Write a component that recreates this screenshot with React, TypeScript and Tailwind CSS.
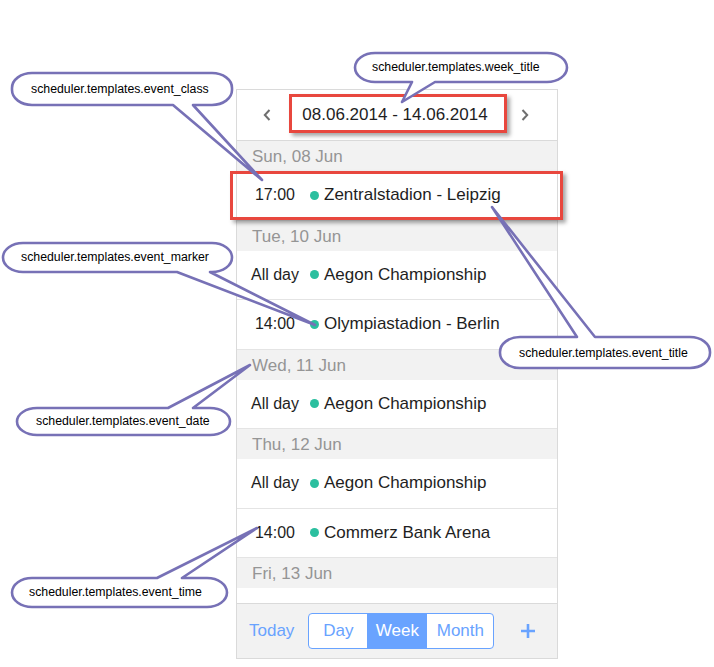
import React from "react"

type Day = {
	date: string
	events: { time: string; title: string }[]
}

const days: Day[] = [
	{ date: "Sun, 08 Jun", events: [{ time: "17:00", title: "Zentralstadion - Leipzig" }] },
	{
		date: "Tue, 10 Jun",
		events: [
			{ time: "All day", title: "Aegon Championship" },
			{ time: "14:00", title: "Olympiastadion - Berlin" },
		],
	},
	{ date: "Wed, 11 Jun", events: [{ time: "All day", title: "Aegon Championship" }] },
	{
		date: "Thu, 12 Jun",
		events: [
			{ time: "All day", title: "Aegon Championship" },
			{ time: "14:00", title: "Commerz Bank Arena" },
		],
	},
	// next rows are scrolled out of view
	{ date: "Fri, 13 Jun", events: [] },
]

type Callout = {
	x: number
	y: number
	w: number
	h: number
	side: "top" | "bottom"
	b1: number
	b2: number
	tip: [number, number]
	text: string
	tx: number
	ty: number
}

const callouts: Callout[] = [
	{ x: 355, y: 53, w: 212, h: 29, side: "bottom", b1: 412, b2: 435, tip: [402, 102], text: "scheduler.templates.week_title", tx: 372, ty: 71 },
	{ x: 12, y: 73, w: 220, h: 32, side: "bottom", b1: 173, b2: 193, tip: [262, 180], text: "scheduler.templates.event_class", tx: 31, ty: 93 },
	{ x: 3, y: 243, w: 229, h: 29, side: "bottom", b1: 177, b2: 210, tip: [315, 325], text: "scheduler.templates.event_marker", tx: 21, ty: 261 },
	{ x: 500, y: 337, w: 210, h: 31, side: "top", b1: 577, b2: 595, tip: [492, 207], text: "scheduler.templates.event_title", tx: 519, ty: 357 },
	{ x: 17, y: 408, w: 213, h: 27, side: "top", b1: 168, b2: 193, tip: [250, 365], text: "scheduler.templates.event_date", tx: 36, ty: 425 },
	{ x: 12, y: 578, w: 215, h: 29, side: "top", b1: 157, b2: 182, tip: [257, 528], text: "scheduler.templates.event_time", tx: 29, ty: 596 },
]

function bubblePath(c: Callout) {
	const rx = 20
	const ry = Math.min(15, c.h / 2)
	const R = c.x + c.w
	const B = c.y + c.h
	const [px, py] = c.tip
	if (c.side === "bottom") {
		return `M${c.x + rx},${c.y} H${R - rx} A${rx},${ry} 0 0 1 ${R},${c.y + ry} V${B - ry} A${rx},${ry} 0 0 1 ${R - rx},${B} H${c.b2} L${px},${py} L${c.b1},${B} H${c.x + rx} A${rx},${ry} 0 0 1 ${c.x},${B - ry} V${c.y + ry} A${rx},${ry} 0 0 1 ${c.x + rx},${c.y} Z`
	}
	return `M${c.x + rx},${c.y} H${c.b1} L${px},${py} L${c.b2},${c.y} H${R - rx} A${rx},${ry} 0 0 1 ${R},${c.y + ry} V${B - ry} A${rx},${ry} 0 0 1 ${R - rx},${B} H${c.x + rx} A${rx},${ry} 0 0 1 ${c.x},${B - ry} V${c.y + ry} A${rx},${ry} 0 0 1 ${c.x + rx},${c.y} Z`
}

const Chevron = ({ flip = false }: { flip?: boolean }) => (
	<svg width="8" height="12" viewBox="0 0 8 12" className={flip ? "rotate-180" : ""}>
		<path d="M6.5 1 L1.8 6 L6.5 11" fill="none" stroke="#6f6f6f" strokeWidth="2" />
	</svg>
)

export default function App() {
	return (
		<div className="relative w-[714px] h-[667px] bg-white overflow-hidden font-[family-name:'Liberation_Sans',Arial,sans-serif] leading-none">
			<div className="pl-[236px] pt-[89px]">
				<div className="w-[322px] border border-[#dadada] bg-white">
					{/* header */}
					<div className="flex items-center h-[51px] border-b border-[#dadada]">
						<div className="w-[60px] flex justify-center">
							<Chevron />
						</div>
						<div className="flex-1 text-center text-[17px] leading-[20px] text-[#1e1e1e]">08.06.2014 - 14.06.2014</div>
						<div className="w-[64px] flex justify-center">
							<Chevron flip />
						</div>
					</div>

					{/* agenda list */}
					<div className="h-[462px] overflow-hidden">
						{days.map((d) => (
							<div key={d.date}>
								<div className="h-[30px] flex items-center pl-[15px] pt-[2px] bg-[#f2f2f2] text-[17px] leading-[20px] text-[#959595]">
									{d.date}
								</div>
								{d.events.map((e, i) => (
									<div
										key={i}
										className="h-[49.5px] flex items-center border-b border-[#e4e4e4] leading-[20px] text-[#1e1e1e]"
									>
										<div className="w-[70px] ml-[3px] text-center text-[16px]">{e.time}</div>
										<span className="w-[9px] h-[9px] rounded-full bg-[#2bbf9f]" />
										<div className="ml-[5px] text-[17px]">{e.title}</div>
									</div>
								))}
							</div>
						))}
					</div>

					{/* footer */}
					<div className="h-[55px] border-t border-[#dadada] bg-[#f2f2f2] flex items-center pl-[12px] text-[17px] leading-[20px]">
						<span className="text-[#69a3ff]">Today</span>
						<div className="ml-[14px] flex h-[36px] rounded-[4px] border border-[#69a3ff] bg-white text-[#69a3ff]">
							<div className="w-[58px] flex items-center justify-center rounded-l-[3px]">Day</div>
							<div className="w-[60px] flex items-center justify-center bg-[#69a3ff] text-white">Week</div>
							<div className="w-[66px] flex items-center justify-center rounded-r-[3px]">Month</div>
						</div>
						<svg width="14" height="14" viewBox="0 0 14 14" className="ml-[27px]">
							<path d="M7 0 V14 M0 7 H14" stroke="#69a3ff" strokeWidth="2.6" />
						</svg>
					</div>
				</div>
			</div>

			{/* highlight boxes */}
			<div className="absolute left-[289px] top-[94px] w-[218px] h-[39px] border-[3px] border-[#e8473e] shadow-[3px_3px_4px_rgba(0,0,0,0.35)]" />
			<div className="absolute left-[230px] top-[171px] w-[333px] h-[49px] border-[3px] border-[#e8473e] shadow-[3px_3px_4px_rgba(0,0,0,0.35)]" />

			{/* callouts */}
			<svg width="714" height="667" className="absolute inset-0 pointer-events-none">
				{callouts.map((c) => (
					<g key={c.text}>
						<path d={bubblePath(c)} fill="#fff" stroke="#7771b6" strokeWidth="2.6" strokeLinejoin="round" />
						<text x={c.tx} y={c.ty} fontSize="12.3" fill="#000" fontFamily="'Liberation Sans', Arial, sans-serif">
							{c.text}
						</text>
					</g>
				))}
			</svg>
		</div>
	)
}
